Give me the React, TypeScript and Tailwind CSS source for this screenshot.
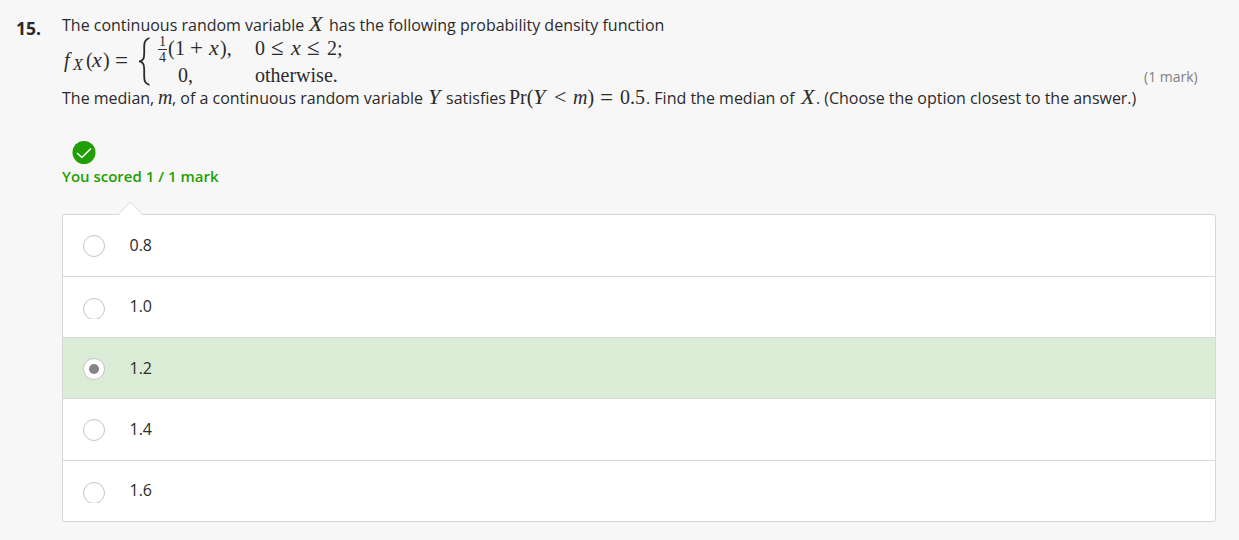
import React from 'react';

const sans = "font-['Open_Sans','Noto_Sans',sans-serif]";
const serif = "font-['Liberation_Serif',serif] text-[20px]";

type Option = {
  label: string;
  row: string;
  clip: string;
  text: string;
  selected?: boolean;
};

const options: Option[] = [
  { label: '0.8', row: 'h-[61px]', clip: 'mt-[20px] h-[22px]', text: 'mt-[18px]' },
  { label: '1.0', row: 'h-[60px]', clip: 'mt-[21px] h-[21px]', text: 'mt-[17px]' },
  { label: '1.2', row: 'h-[60px]', clip: 'mt-[20px] h-[22px]', text: 'mt-[18px]', selected: true },
  { label: '1.4', row: 'h-[61px]', clip: 'mt-[20px] h-[22px]', text: 'mt-[18px]' },
  { label: '1.6', row: 'h-[60px]', clip: 'mt-[21px] h-[21px]', text: 'mt-[17px]' },
];

function Radio({ clip, selected }: { clip: string; selected?: boolean }) {
  return (
    <span className={`ml-5 w-[22px] shrink-0 overflow-hidden ${clip}`}>
      <span className="flex h-[22px] w-[22px] items-center justify-center rounded-full border border-[#c4c4c4] bg-white">
        {selected && <span className="h-[10px] w-[10px] rounded-full bg-[#858585]" />}
      </span>
    </span>
  );
}

function Piece({ w, math, children }: { w: string; math?: boolean; children: React.ReactNode }) {
  return <span className={`shrink-0 ${w} ${math ? serif : ''}`}>{children}</span>;
}

function Cap({ children }: { children: React.ReactNode }) {
  return <i className="inline-block origin-left scale-x-112">{children}</i>;
}

function Density() {
  return (
    <div className={`flex h-[52px] leading-[24px] ${serif}`}>
      <div className="mt-[12px] flex h-6 w-[75px] shrink-0 items-baseline">
        <i className="ml-[2px] w-[9px]">f</i>
        <i className="relative top-[3px] w-[13px] text-[16px]">X</i>
        <span className="w-[6px]">(</span>
        <i className="w-[11px] origin-left scale-x-110">x</i>
        <span className="w-[12px]">)</span>
        <span className="relative top-px text-[23px]">=</span>
      </div>
      <svg className="mt-px h-[50px] w-[15px] shrink-0" viewBox="0 0 15 50" fill="none" stroke="#2b2b2b" strokeWidth="1.8">
        <path d="M12.500 1C8 2.300 7.200 5 7.200 9V17C7.200 21.500 6 24.400 2 24.400C6 24.400 7.200 27.500 7.200 32V39C7.200 44 8 46.500 12.500 48" />
      </svg>
      <div className="flex w-[103px] shrink-0 flex-col">
        <div className="flex h-[27px] items-start">
          <div className="ml-[6px] -mt-[1px] flex w-[9px] shrink-0 flex-col items-center text-[14px] leading-[13px]">
            <span className="h-[14px]">1</span>
            <span className="h-px w-[9px] bg-[#333]" />
            <span className="mt-[1px] h-[13px]">4</span>
          </div>
          <div className="ml-[1px] flex items-baseline">
            <span className="w-[7px]">(</span>
            <span className="w-[15px]">1</span>
            <span className="w-[19px] text-[23px]">+</span>
            <i className="w-[11px] origin-left scale-x-110">x</i>
            <span>),</span>
          </div>
        </div>
        <div className="ml-[26px]">0,</div>
      </div>
      <div className="flex flex-col">
        <div className="flex h-[27px] items-baseline">
          <span className="w-[16px]">0</span>
          <span className="w-[20px] text-[23px]">≤</span>
          <i className="w-[16px] origin-left scale-x-110">x</i>
          <span className="w-[20px] text-[23px]">≤</span>
          <span>2;</span>
        </div>
        <div>otherwise.</div>
      </div>
    </div>
  );
}

export default function App() {
  return (
    <main className={`flex h-[540px] w-[1239px] overflow-hidden bg-[#f7f7f7] text-[#2b2b2b] ${sans} text-[16px]`}>
      <div className="w-[62px] shrink-0 pl-[16px] pt-[16px] text-[17.500px] font-bold leading-6">15.</div>
      <div className="flex w-[1154px] shrink-0 flex-col">
        <div className="flex h-[118px]">
          <div className="w-[1082px] shrink-0 pt-[12px]">
            <div className="flex h-6 items-baseline whitespace-pre leading-6">
              <Piece w="w-[247px]">The continuous random variable</Piece>
              <Piece w="w-[20px]" math><Cap>X</Cap></Piece>
              <span>has the following probability density function</span>
            </div>
            <Density />
            <div className="-mt-[3px] flex h-6 items-baseline whitespace-pre leading-6">
              <Piece w="w-[96px]">The median,</Piece>
              <Piece w="w-[14px]" math><i>m</i></Piece>
              <Piece w="w-[256px]">, of a continuous random variable</Piece>
              <Piece w="w-[18px]" math><Cap>Y</Cap></Piece>
              <Piece w="w-[63px]">satisfies</Piece>
              <Piece w="w-[45px]" math>Pr(<Cap>Y</Cap></Piece>
              <Piece w="w-[19px]" math><span className="text-[22px]">&lt;</span></Piece>
              <Piece w="w-[27px]" math><i>m</i>)</Piece>
              <Piece w="w-[20px]" math><span className="relative top-px text-[23px]">=</span></Piece>
              <Piece w="w-[26px]" math>0.5</Piece>
              <Piece w="w-[155px]">. Find the median of</Piece>
              <Piece w="w-[15px]" math><Cap>X</Cap></Piece>
              <span className="tracking-[-0.020px]">. (Choose the option closest to the answer.)</span>
            </div>
          </div>
          <div className="whitespace-nowrap pt-[67px] text-[14px] leading-5 text-[#808080]">(1 mark)</div>
        </div>
        <div className="h-[96px] pt-[23px]">
          <svg className="ml-[9.500px] h-6 w-6" viewBox="0 0 24 24" fill="none">
            <circle cx="12" cy="11.500" r="11.500" fill="#1f9f04" />
            <path d="M5 12L9.800 16.500L19 7.500" stroke="#fff" strokeWidth="1.500" />
          </svg>
          <div className="-mt-px text-[15px] font-semibold leading-6 text-[#1f9f04]">You scored 1 / 1 mark</div>
        </div>
        <div className="relative h-[308px] rounded-[3px] border border-[#d8d8d8] bg-white">
          <svg className="absolute -top-[14px] left-[55px] h-[15px] w-[26px]" viewBox="0 0 26 15">
            <path d="M0.500 14L12.500 1L24.500 14V15H0.500Z" fill="#fff" />
            <path d="M0.500 13.500L12.500 0.700L24.500 13.500" fill="none" stroke="#dcdcdc" />
          </svg>
          <div className="flex flex-col divide-y divide-[#d8d8d8]">
            {options.map((o) => (
              <label key={o.label} className={`box-content flex shrink-0 items-start ${o.row} ${o.selected ? 'bg-[#daebd6]' : ''}`}>
                <Radio clip={o.clip} selected={o.selected} />
                <span className={`ml-[24.500px] text-[16px] leading-6 ${o.text}`}>{o.label}</span>
              </label>
            ))}
          </div>
        </div>
      </div>
    </main>
  );
}
